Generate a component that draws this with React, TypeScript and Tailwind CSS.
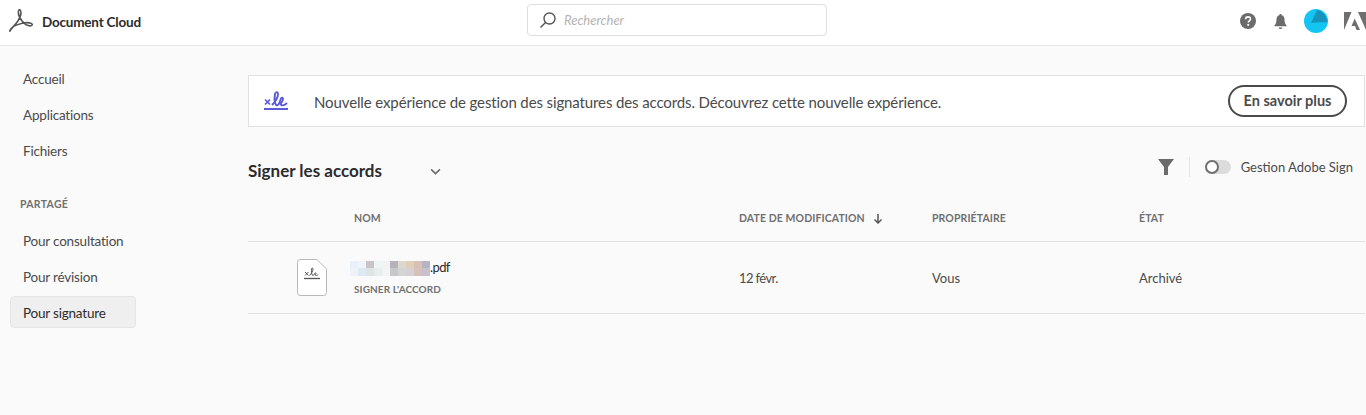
import React from "react";

const mosaicTop = ["#e8f1f8", "#eef4fa", "#c9c5c6", "#eef5f6", "#f2f2f2", "#b5b2b9", "#dcd8cf", "#dfcfb8", "#d8c0b4", "#b5b3c4"];
const mosaicBottom = ["#eef3fa", "#dfe9f5", "#dfe4e6", "#e8eeee", "#f4f4f4", "#c6c8cb", "#d4d4d4", "#d8cfd3", "#d6c0bc", "#c9c0cc"];

const NavItem = ({ label, active }: { label: string; active?: boolean }) => (
  <div className={`h-8 flex items-center pl-[12px] mx-[10px] w-[126px] rounded-[4px] border text-[13.5px] tracking-[-0.2px] ${active ? "bg-[#efefef] border-[#e6e6e6] text-[#2c2c2c]" : "border-transparent text-[#4b4b4b]"}`}>
    <span className="mt-[2px]">{label}</span>
  </div>
);

export default function App() {
  return (
    <div className="h-[415px] w-[1366px] overflow-hidden bg-[#fafafa] font-['Lato','Liberation_Sans',sans-serif] flex flex-col">
      <header className="h-[46px] shrink-0 bg-white border-b border-[#e8e8e8] flex items-center relative">
        <div className="flex items-center w-[527px] shrink-0 pl-[8px] -mt-[2px]">
          <svg viewBox="0 0 24 24" className="w-[25px] h-[25px]" fill="none" stroke="#555" strokeWidth="1.500">
            <path d="M1.500 21.800C2.800 18.500 7 15.500 9.500 11.500 11.800 8 12.800 4.500 12.300 2.300 11.900.3 10.200.4 10 2.300 9.700 5 11 8.500 13.500 11.500 15.500 13.800 18.500 16.200 21 16.200 23.500 16.200 24 14.500 22.300 13.800 19.500 12.600 13 13.500 8 15.500 4.500 17 1.800 19.200 1.500 21.800z" />
          </svg>
          <span className="ml-[9px] mt-[1px] text-[13.5px] tracking-[-0.2px] font-bold text-[#2c2c2c]">Document Cloud</span>
        </div>
        <div className="w-[300px] h-[32px] -mt-[5px] bg-white border border-[#dedede] rounded-[4px] flex items-center pl-[11px]">
          <svg viewBox="0 0 18 18" className="w-[18px] h-[18px]" fill="none" stroke="#555" strokeWidth="1.400">
            <circle cx="10.500" cy="7.500" r="5.500" />
            <path d="M6.500 11.500L1.500 16.500" />
          </svg>
          <span className="ml-[7px] mt-[2px] text-[13px] italic text-[#b3b3b3]">Rechercher</span>
        </div>
        <div className="ml-auto flex items-center -mt-[4px]">
          <svg viewBox="0 0 16 16" className="w-4 h-4 ml-[1px]">
            <circle cx="8" cy="8" r="8" fill="#6b6b6b" />
            <path d="M5.600 6.200c0-1.500 1.100-2.300 2.500-2.300s2.400.8 2.400 2.100c0 1.900-2.200 1.800-2.200 3.500" fill="none" stroke="#fff" strokeWidth="1.600" />
            <circle cx="8.200" cy="11.800" r="1.100" fill="#fff" />
          </svg>
          <svg viewBox="0 0 16 17" className="w-[15px] h-[17px] ml-[17px] mt-[1px]">
            <path d="M8 0.500c.8 0 1.300.6 1.300 1.300 2 .6 3 2.400 3 4.500 0 3 .6 4.800 2.200 6.400v.8H1.500v-.8C3.100 11.100 3.700 9.300 3.700 6.300c0-2.100 1-3.900 3-4.500C6.700 1.100 7.200.5 8 .5z" fill="#6b6b6b" />
            <path d="M6 15h4c0 1-.9 1.600-2 1.600S6 16 6 15z" fill="#6b6b6b" />
          </svg>
          <div className="relative w-6 h-6 ml-[16px] rounded-full overflow-hidden bg-[#12c5f2]">
            <svg viewBox="0 0 24 24" className="w-6 h-6">
              <path d="M7 14L13 1C19 2 23 7 23.500 13.500 18 13 12 13 7 14z" fill="#1794bd" />
            </svg>
          </div>
          <svg viewBox="0 0 22 18" className="w-[22px] h-[18px] ml-[16px]">
            <path d="M0 0h7.500L0 18zM14 0h8v18zM10.700 6.500L16 18h-3.500l-1.500-4H7.500z" fill="#6f6f6f" />
          </svg>
        </div>
      </header>

      <div className="flex flex-1 min-h-0">
        <aside className="w-[248px] shrink-0 pt-[16px]">
          <div className="flex flex-col gap-1">
            <NavItem label="Accueil" />
            <NavItem label="Applications" />
            <NavItem label="Fichiers" />
          </div>
          <div className="mt-[31px] pl-[20px] text-[10.5px] font-bold tracking-[0.3px] text-[#707070] h-[14px] leading-[14px]">PARTAGÉ</div>
          <div className="mt-[13px] flex flex-col gap-1">
            <NavItem label="Pour consultation" />
            <NavItem label="Pour révision" />
            <NavItem label="Pour signature" active />
          </div>
        </aside>

        <main className="flex-1 min-w-0 pr-[1px] pt-[29px]">
          <div className="h-[52px] bg-white border border-[#e1e1e1] flex items-center pl-[15px] pr-[17px]">
            <svg viewBox="0 0 24 20" className="w-[24px] h-[20px]" fill="none" stroke="#5b5bd6">
              <path d="M1 8.500l5 5M6 8.500l-5 5" strokeWidth="1.700" />
              <path d="M8 14C11 11 14 6 14 3 14 .5 11.500 .5 11 3 10.500 6 10.500 12 12 14 13.500 15 15 13.500 16 10 17 6 19 6 19 8 19 10 17 12 16.500 13 17.500 15 20 15 23 12" strokeWidth="1.900" />
              <path d="M0 18h24" strokeWidth="2" />
            </svg>
            <span className="ml-[26px] mt-[2px] text-[15px] tracking-[-0.12px] text-[#4b4b4b]">Nouvelle expérience de gestion des signatures des accords. Découvrez cette nouvelle expérience.</span>
            <button className="ml-auto w-[119px] h-[32px] rounded-full border-2 border-[#4b4b4b] text-[14.5px] font-bold text-[#4b4b4b] flex items-center justify-center">En savoir plus</button>
          </div>

          <div className="h-[60px] flex items-center relative">
            <span className="text-[17px] font-bold text-[#2c2c2c] w-[182px] mt-[28px]">Signer les accords</span>
            <svg viewBox="0 0 10 6" className="w-[11px] h-[7px] mt-[28px]" fill="none" stroke="#6b6b6b" strokeWidth="1.500">
              <path d="M1 1l4 4 4-4" />
            </svg>
            <div className="ml-auto flex items-center mt-[19px] pr-[12px]">
              <svg viewBox="0 0 16 16" className="w-4 h-4"><path d="M0 0h16L10 8v8H6V8z" fill="#6b6b6b" /></svg>
              <div className="w-px h-5 bg-[#e6e6e6] ml-[15px]" />
              <div className="ml-[15px] relative w-[26px] h-[14px] rounded-full bg-[#dcdcdc]">
                <div className="absolute left-0 top-0 w-[14px] h-[14px] rounded-full bg-white border-2 border-[#707070]" />
              </div>
              <span className="ml-[10px] mt-[2px] text-[13px] text-[#4b4b4b]">Gestion Adobe Sign</span>
            </div>
          </div>

          <div className="h-[55px] flex items-center border-b border-[#e1e1e1] pt-[9px] text-[10.5px] font-bold tracking-[0.1px] text-[#707070]">
            <div className="w-[491px] pl-[106px]">NOM</div>
            <div className="w-[193px] flex items-center">
              <span className="w-[134px] whitespace-nowrap">DATE DE MODIFICATION</span>
              <svg viewBox="0 0 10 10" className="w-[10px] h-[10px]" fill="none" stroke="#555" strokeWidth="1.500">
                <path d="M5 0v9M1.500 5.500L5 9l3.500-3.500" />
              </svg>
            </div>
            <div className="w-[207px]">PROPRIÉTAIRE</div>
            <div>ÉTAT</div>
          </div>

          <div className="h-[72px] flex items-center border-b border-[#e1e1e1] text-[13px] text-[#4b4b4b]">
            <div className="w-[106px] pl-[49px] shrink-0">
              <svg viewBox="0 0 30 37" className="w-[30px] h-[37px]">
                <path d="M3 .5h17L29.500 10v23.500a3 3 0 0 1-3 3H3a2.500 3 0 0 1-2.500-3v-30A2.500 3 0 0 1 3 .5z" fill="#fff" stroke="#b9b9b9" />
                <path d="M8 13l3.500 3.500M11.500 13L8 16.500" fill="none" stroke="#555" strokeWidth="1" />
                <path d="M12.500 16.500c2-2 3.500-4.500 3.500-6.500 0-1.200-1.300-1.200-1.500 0-.3 2 0 5 1 6.300.8.700 1.700-.8 2.300-2 .5-.8 1.300-.6 1.200.2-.1.700-.8 1.200-.8 1.600.6.800 2 .6 3-.6" fill="none" stroke="#555" strokeWidth="1" />
                <path d="M7 19.500h16" stroke="#555" strokeWidth="1.300" />
              </svg>
            </div>
            <div className="w-[385px] shrink-0 flex flex-col">
              <div className="flex items-center h-[18px] -ml-[4px]">
                <div className="w-[80px] h-[15px] flex flex-col">
                  <div className="flex flex-1">
                    {mosaicTop.map((c, i) => <div key={i} className="flex-1" style={{ background: c }} />)}
                  </div>
                  <div className="flex flex-1">
                    {mosaicBottom.map((c, i) => <div key={i} className="flex-1" style={{ background: c }} />)}
                  </div>
                </div>
                <span className="text-[#2c2c2c] tracking-[-0.6px]">.pdf</span>
              </div>
              <span className="mt-[5px] text-[10px] font-bold tracking-[0.1px] text-[#707070] leading-[14px]">SIGNER L'ACCORD</span>
            </div>
            <div className="w-[193px] tracking-[-0.6px] mt-[2px]">12 févr.</div>
            <div className="w-[207px] mt-[2px]">Vous</div>
            <div className="mt-[2px]">Archivé</div>
          </div>
        </main>
      </div>
    </div>
  );
}
